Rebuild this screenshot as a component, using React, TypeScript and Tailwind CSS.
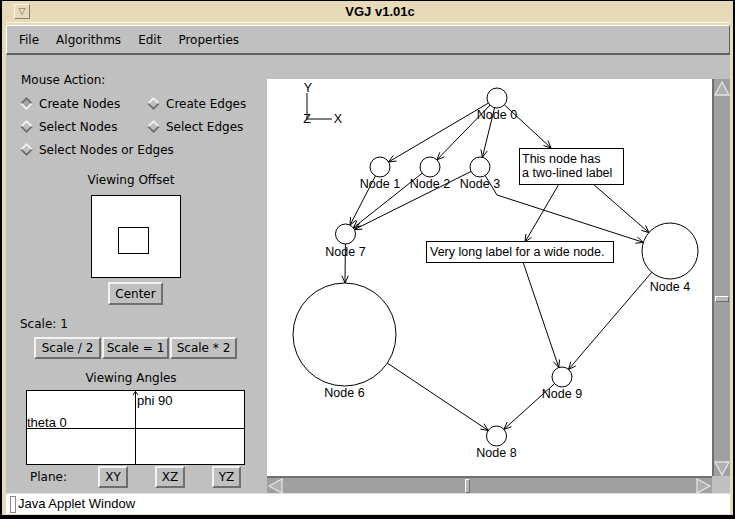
import React from 'react';

type P = [number, number];

const trim = (a: P, b: P, ra: number, rb: number): [P, P] => {
  const dx = b[0] - a[0];
  const dy = b[1] - a[1];
  const l = Math.hypot(dx, dy);
  const ux = dx / l;
  const uy = dy / l;
  return [
    [a[0] + ux * ra, a[1] + uy * ra],
    [b[0] - ux * rb, b[1] - uy * rb],
  ];
};

const head = (from: P, tip: P) => {
  const ang = Math.atan2(tip[1] - from[1], tip[0] - from[0]);
  const L = 8;
  const s = 0.42;
  const p1 = [tip[0] - L * Math.cos(ang - s), tip[1] - L * Math.sin(ang - s)];
  const p2 = [tip[0] - L * Math.cos(ang + s), tip[1] - L * Math.sin(ang + s)];
  return `${p1[0]},${p1[1]} ${tip[0]},${tip[1]} ${p2[0]},${p2[1]}`;
};

const nodes: Record<string, { c: P; r: number; label: string; ly: number }> = {
  n0: { c: [230, 19], r: 10, label: 'Node 0', ly: 36 },
  n1: { c: [113, 88], r: 10, label: 'Node 1', ly: 105 },
  n2: { c: [163, 88], r: 10, label: 'Node 2', ly: 105 },
  n3: { c: [213, 88], r: 10, label: 'Node 3', ly: 105 },
  n7: { c: [78.5, 155], r: 10, label: 'Node 7', ly: 173 },
  n6: { c: [77.5, 255.5], r: 51.5, label: 'Node 6', ly: 314 },
  n4: { c: [403, 172], r: 28, label: 'Node 4', ly: 208 },
  n9: { c: [295, 298], r: 10, label: 'Node 9', ly: 315 },
  n8: { c: [229.5, 357], r: 10, label: 'Node 8', ly: 374 },
};

// node-to-node edges
const links: [string, string][] = [
  ['n0', 'n1'],
  ['n0', 'n2'],
  ['n0', 'n3'],
  ['n1', 'n7'],
  ['n2', 'n7'],
  ['n3', 'n7'],
  ['n7', 'n6'],
  ['n4', 'n9'],
  ['n6', 'n8'],
  ['n9', 'n8'],
];

// edges touching the label boxes, drawn as point lists
const paths: P[][] = [
  [trim(nodes.n0.c, [284, 69], 10, 0)[0], [284, 69]],
  [trim(nodes.n3.c, [230, 116], 10, 0)[0], [230, 116], trim([230, 116], nodes.n4.c, 0, 28)[1]],
  [[292, 105], [258, 163]],
  [[326, 105], trim([326, 105], nodes.n4.c, 0, 28)[1]],
  [[256, 183], trim([256, 183], nodes.n9.c, 0, 10)[1]],
];

const Graph = () => (
  <svg width="445" height="397" className="block">
    <g stroke="black" strokeWidth="1" fill="none">
      <line x1="40" y1="14" x2="40" y2="40" />
      <line x1="40" y1="40" x2="65" y2="40" />
    </g>
    <g fontFamily="'Liberation Sans', sans-serif" fontSize="12.5" fill="black">
      <text x="41" y="9" textAnchor="middle" dominantBaseline="central">Y</text>
      <text x="40" y="40" textAnchor="middle" dominantBaseline="central">Z</text>
      <text x="71" y="40" textAnchor="middle" dominantBaseline="central">X</text>
    </g>

    <g stroke="black" strokeWidth="1" fill="none">
      {links.map(([a, b]) => {
        const [s, e] = trim(nodes[a].c, nodes[b].c, nodes[a].r, nodes[b].r);
        return (
          <g key={a + b}>
            <line x1={s[0]} y1={s[1]} x2={e[0]} y2={e[1]} />
            <polyline points={head(s, e)} />
          </g>
        );
      })}
      {paths.map((pts, i) => (
        <g key={i}>
          <polyline points={pts.map((p) => p.join(',')).join(' ')} />
          <polyline points={head(pts[pts.length - 2], pts[pts.length - 1])} />
        </g>
      ))}
      {Object.entries(nodes).map(([k, n]) => (
        <circle key={k} cx={n.c[0]} cy={n.c[1]} r={n.r} fill="none" />
      ))}
    </g>

    <g fontFamily="'Liberation Sans', sans-serif" fontSize="12.5" fill="black">
      {Object.entries(nodes).map(([k, n]) => (
        <text key={k} x={n.c[0]} y={n.ly} textAnchor="middle" dominantBaseline="central">
          {n.label}
        </text>
      ))}
    </g>

    <rect x="252.5" y="69.5" width="104" height="36" fill="white" stroke="black" />
    <rect x="159.5" y="162.5" width="187" height="21" fill="white" stroke="black" />
    <g fontFamily="'Liberation Sans', sans-serif" fontSize="12.5" fill="black">
      <text x="255" y="80" dominantBaseline="central">This node has</text>
      <text x="255" y="94" dominantBaseline="central">a two-lined label</text>
      <text x="163" y="173" dominantBaseline="central">Very long label for a wide node.</text>
    </g>
  </svg>
);

const Btn = ({ children, className }: { children: React.ReactNode; className: string }) => (
  <div
    className={
      'flex items-center justify-center bg-[#c0c0c0] border-2 border-t-[#f2f2f2] border-l-[#f2f2f2] border-b-[#6e6e6e] border-r-[#6e6e6e] ' +
      className
    }
  >
    {children}
  </div>
);

const Diamond = ({ on }: { on?: boolean }) => (
  <svg width="13" height="13" viewBox="0 0 13 13" className="shrink-0">
    <polygon points="0,6.5 6.5,0 13,6.5" fill={on ? '#6e6e6e' : '#f2f2f2'} />
    <polygon points="0,6.5 6.5,13 13,6.5" fill={on ? '#f2f2f2' : '#6e6e6e'} />
    <polygon points="2.5,6.5 6.5,2.5 10.5,6.5 6.5,10.5" fill={on ? '#a4a4a4' : '#c0c0c0'} />
  </svg>
);

const Radio = ({ label, on, w }: { label: string; on?: boolean; w?: string }) => (
  <div className={'flex items-center gap-[6px] ' + (w ?? '')}>
    <Diamond on={on} />
    <span>{label}</span>
  </div>
);

const Arrow = ({ dir }: { dir: 'up' | 'down' | 'left' | 'right' }) => {
  const pts = {
    up: '8,2 15,15 1,15',
    down: '1,2 15,2 8,15',
    left: '2,8 15,1 15,15',
    right: '1,1 14,8 1,15',
  }[dir];
  return (
    <svg width="16" height="16" viewBox="0 0 16 16" className="shrink-0">
      <polygon points={pts} fill="#b0b0b0" stroke="#e4e4e4" strokeWidth="1.3" />
    </svg>
  );
};

export default function App() {
  return (
    <div className="w-[735px] h-[519px] bg-black pl-[2px] pr-[2px] pt-[1px] pb-[4px] font-['DejaVu_Sans',sans-serif] text-[12px] text-black">
      <div className="h-full bg-[#e6dab8] flex flex-col pl-[4px] pr-[3px]">
        {/* title bar */}
        <div className="h-[22px] flex items-center border-b border-[#fbf6e6] shrink-0">
          <div className="ml-[8px] w-[16px] h-[15px] flex items-center justify-center border border-t-[#fbf6e6] border-l-[#fbf6e6] border-b-[#8a8066] border-r-[#8a8066] text-[9px] text-[#6e6650] leading-none">
            ▽
          </div>
          <div className="flex-1 text-center font-['Liberation_Sans',sans-serif] font-bold text-[13px]">
            VGJ v1.01c
          </div>
        </div>

        {/* menu bar */}
        <div className="mt-[2px] h-[30px] shrink-0 bg-[#c0c0c0] border-t border-l border-t-white border-l-white border-b-2 border-r border-b-[#606060] border-r-[#606060] flex items-center gap-[17px] pl-[12px]">
          <span>File</span>
          <span>Algorithms</span>
          <span>Edit</span>
          <span>Properties</span>
        </div>

        {/* content */}
        <div className="h-[438px] shrink-0 bg-[#c0c0c0] flex">
          <div className="w-[261px] shrink-0 flex flex-col leading-[16px]">
            <div className="mt-[17px] ml-[15px]">Mouse Action:</div>
            <div className="mt-[4px] flex flex-col pl-[14px]">
              <div className="h-[23px] flex items-center">
                <Radio label="Create Nodes" on w="w-[127px]" />
                <Radio label="Create Edges" />
              </div>
              <div className="h-[23px] flex items-center">
                <Radio label="Select Nodes" w="w-[127px]" />
                <Radio label="Select Edges" />
              </div>
              <div className="h-[23px] flex items-center">
                <Radio label="Select Nodes or Edges" />
              </div>
            </div>
            <div className="mt-[11px] w-[250px] text-center">Viewing Offset</div>
            <div className="mt-[7px] ml-[85px] w-[90px] h-[83px] bg-white border border-black">
              <svg width="88" height="81" className="block">
                <rect x="26.5" y="31.5" width="30" height="26" fill="none" stroke="black" />
              </svg>
            </div>
            <Btn className="mt-[4px] ml-[102px] w-[55px] h-[23px]">Center</Btn>
            <div className="mt-[11px] ml-[14px]">Scale: 1</div>
            <div className="mt-[5px] ml-[28px] flex gap-[1px]">
              <Btn className="w-[67px] h-[22px]">Scale / 2</Btn>
              <Btn className="w-[67px] h-[22px]">Scale = 1</Btn>
              <Btn className="w-[67px] h-[22px]">Scale * 2</Btn>
            </div>
            <div className="mt-[11px] w-[250px] text-center">Viewing Angles</div>
            <div className="mt-[4px] ml-[20px] w-[219px] h-[75px] bg-white border border-black">
              <svg width="217" height="73" className="block">
                <line x1="108.5" y1="0" x2="108.5" y2="73" stroke="black" />
                <line x1="0" y1="37.5" x2="217" y2="37.5" stroke="black" />
                <polyline points="106,4 108.5,0.5 111,4" fill="none" stroke="black" />
                <g fontFamily="'Liberation Sans', sans-serif" fontSize="13" fill="black">
                  <text x="110" y="9" dominantBaseline="central">phi 90</text>
                  <text x="0" y="31" dominantBaseline="central">theta 0</text>
                </g>
              </svg>
            </div>
            <div className="mt-[1px] flex items-center h-[22px]">
              <span className="ml-[24px] w-[68px]">Plane:</span>
              <Btn className="w-[30px] h-[22px]">XY</Btn>
              <Btn className="ml-[27px] w-[30px] h-[22px]">XZ</Btn>
              <Btn className="ml-[27px] w-[29px] h-[22px]">YZ</Btn>
            </div>
          </div>

          {/* canvas with scrollbars */}
          <div className="pt-[24px] flex flex-col">
            <div className="flex">
              <div className="w-[445px] h-[397px] bg-white">
                <Graph />
              </div>
              <div className="w-[18px] h-[397px] bg-[#a0a0a0] border-l-2 border-[#707070] flex flex-col items-center">
                <div className="h-[17px] flex items-center">
                  <Arrow dir="up" />
                </div>
                <div className="h-[200px]" />
                <div className="w-[14px] h-[6px] bg-[#b8b8b8] border-t border-l border-white border-b border-r border-b-[#6e6e6e] border-r-[#6e6e6e]" />
                <div className="flex-1" />
                <div className="h-[17px] flex items-center">
                  <Arrow dir="down" />
                </div>
              </div>
            </div>
            <div className="flex">
              <div className="w-[445px] h-[17px] bg-[#a0a0a0] border-t-2 border-[#707070] flex items-center">
                <Arrow dir="left" />
                <div className="w-[182px]" />
                <div className="w-[5px] h-[14px] bg-[#b8b8b8] border-t border-l border-white border-b border-r border-b-[#6e6e6e] border-r-[#6e6e6e]" />
                <div className="flex-1" />
                <Arrow dir="right" />
              </div>
              <div className="w-[18px] h-[17px] bg-[#c0c0c0]" />
            </div>
          </div>
        </div>

        {/* status bar */}
        <div className="h-[21px] shrink-0 bg-white border-t border-[#e0e0e0] flex items-center">
          <div className="ml-[4px] w-[6px] h-[17px] bg-white border border-[#8a8a8a]" />
          <span className="ml-[2px] font-['Liberation_Sans',sans-serif] text-[13px]">Java Applet Window</span>
        </div>
      </div>
    </div>
  );
}
